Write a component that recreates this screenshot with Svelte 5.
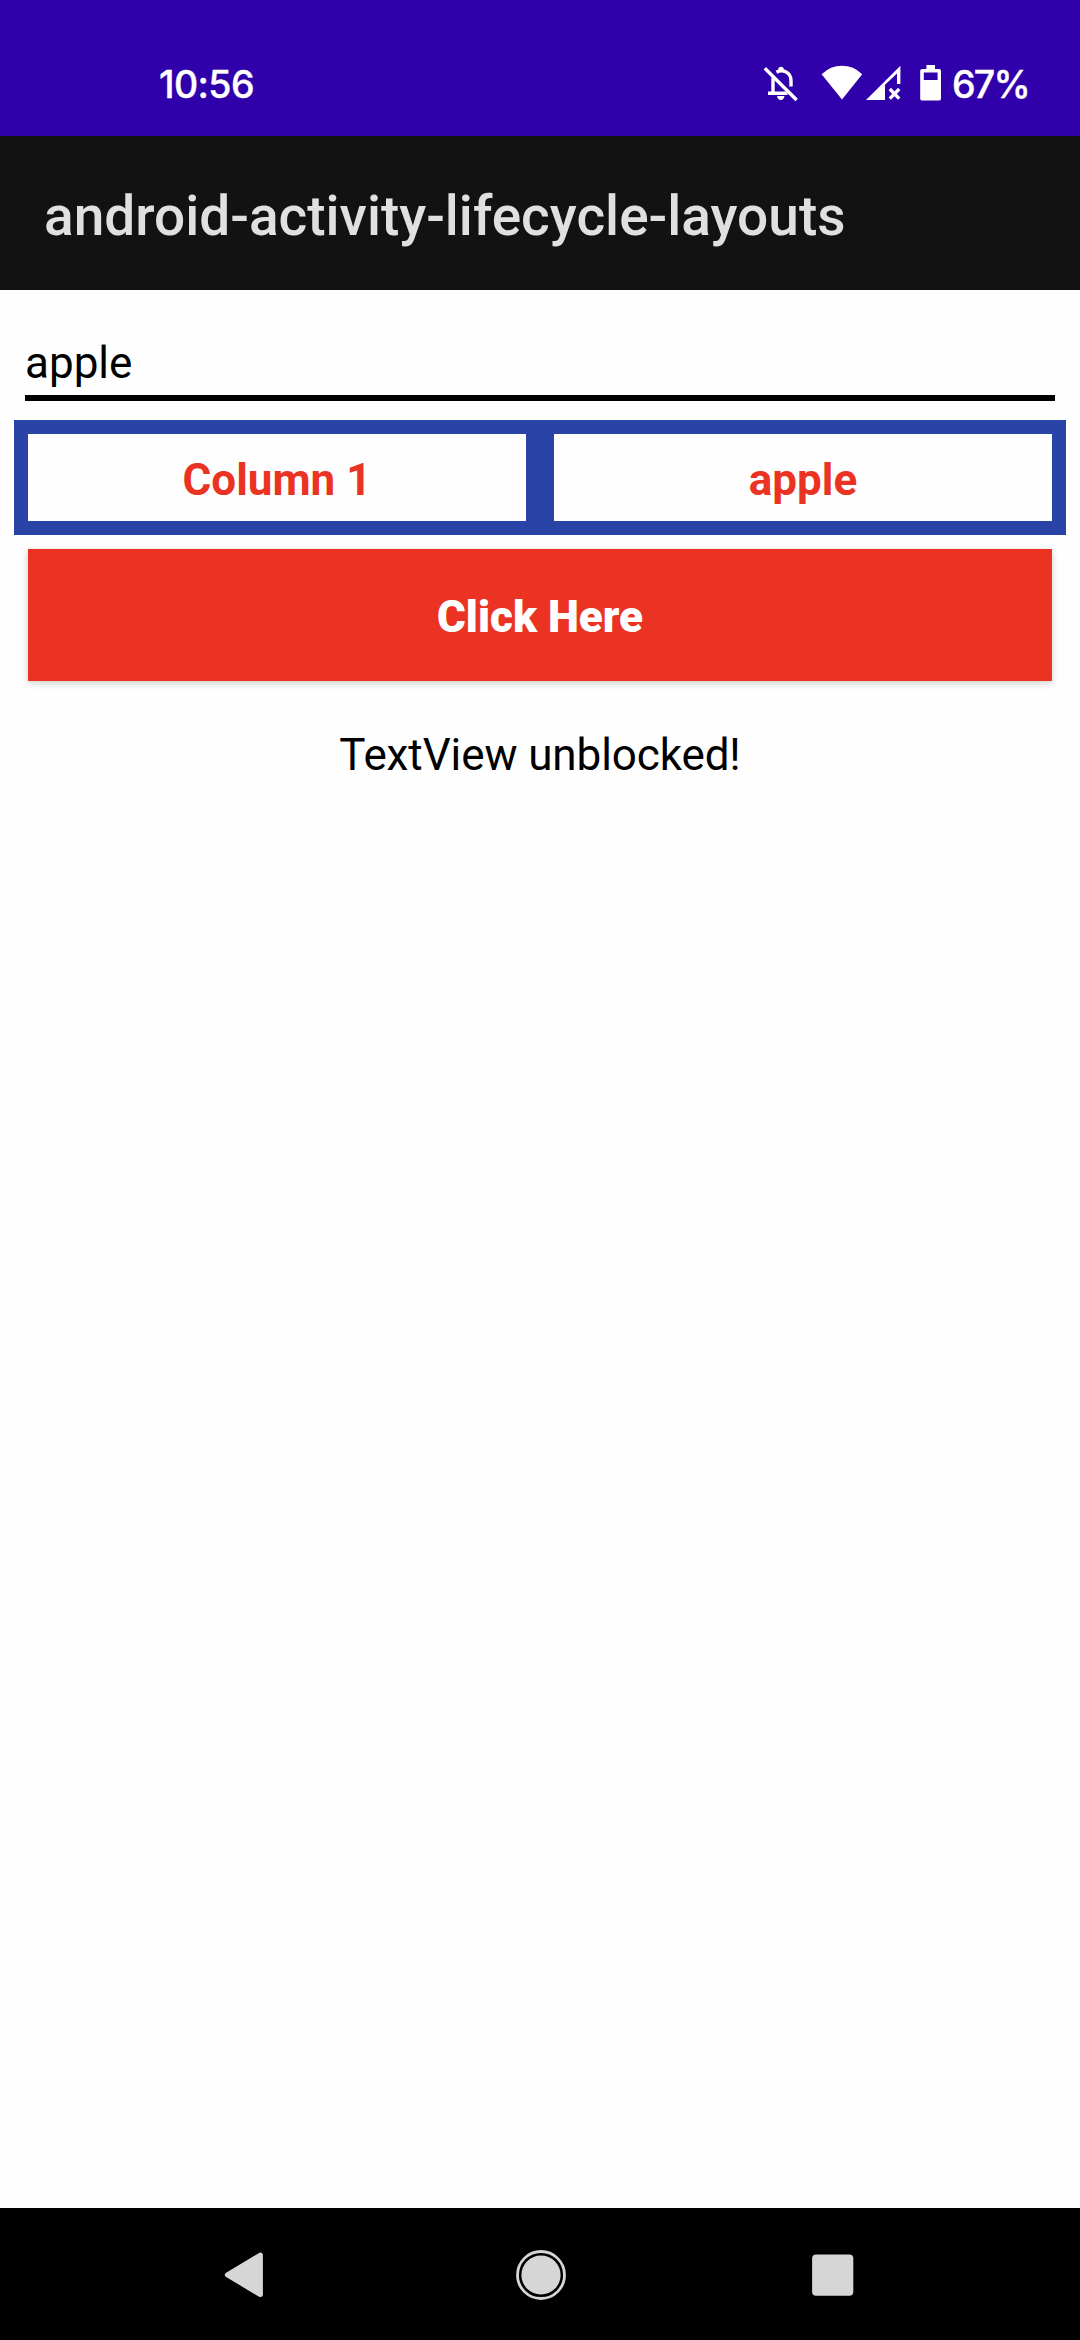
<script>
  let value = $state('apple');
  const title = 'android-activity-lifecycle-layouts';
</script>

<div class="screen">
  <header class="status">
    <span class="clock">10:56</span>
    <div class="indicators">
      <svg class="bell" width="36" height="38" viewBox="0 0 36 38">
        <g fill="none" stroke="#fff" stroke-width="3.4">
          <path d="M10 12.5V27.2M5 28.2H24.5" />
          <path d="M13.5 7.2Q18 4.6 22.6 6.8Q28 9.4 28 15.5V21.5" />
          <path d="M1.8 3.2L33.6 35" />
        </g>
        <path fill="#fff" d="M14 31H21.5Q20.8 35 17.8 35Q14.8 35 14 31ZM15.2 6V4.4Q15.4 1.8 18 1.8Q20.6 1.8 20.8 4.4V6Z" />
      </svg>
      <svg class="wifi" width="42" height="36" viewBox="0 0 42 36">
        <path fill="#fff" d="M.6 9.2Q9.5 .8 21 .8Q32.5 .8 41.2 9.2L21 34.6Z" />
      </svg>
      <svg class="signal" width="36" height="36" viewBox="0 0 36 36">
        <path fill="#fff" d="M0 35L34.4 .8V19H31V8.4L19 19.8V35Z" />
        <path fill="none" stroke="#fff" stroke-width="3.3" d="M23.8 24L33.2 33.6M33.2 24L23.8 33.6" />
      </svg>
      <svg class="battery" width="22" height="36" viewBox="0 0 22 36">
        <path fill="#fff" fill-rule="evenodd" d="M6.4 0H15V4H19Q21 4 21 6V33.4Q21 35.6 19 35.6H2.2Q.2 35.6 .2 33.4V6Q.2 4 2.2 4H6.4ZM3.8 7.4V15H17.6V7.4Z" />
      </svg>
      <span class="percent">67%</span>
    </div>
  </header>

  <div class="appbar"><h1>{title}</h1></div>

  <main>
    <input type="text" bind:value aria-label="Text" />
    <div class="table">
      <div class="cell">Column 1</div>
      <div class="cell">{value}</div>
    </div>
    <button type="button">Click Here</button>
    <p>TextView unblocked!</p>
  </main>

  <nav>
    <svg width="46" height="48" viewBox="0 0 46 48">
      <path fill="#d6d6d6" stroke="#d6d6d6" stroke-width="5" stroke-linejoin="round" d="M4.4 23.9L37.4 4.1V43.6Z" />
    </svg>
    <svg width="50" height="50" viewBox="0 0 50 50">
      <circle cx="25" cy="25" r="23.5" fill="none" stroke="#d6d6d6" stroke-width="2.8" />
      <circle cx="25" cy="25" r="19.6" fill="#d6d6d6" />
    </svg>
    <svg width="42" height="42" viewBox="0 0 42 42">
      <rect x=".1" y=".4" width="41.2" height="41.4" rx="4" fill="#d6d6d6" />
    </svg>
  </nav>
</div>

<style>
  :global(body) {
    margin: 0;
    background: #fff;
  }
  .screen {
    display: flex;
    flex-direction: column;
    width: 1080px;
    height: 2340px;
    overflow: hidden;
    background: #fefefe;
    color: #000;
    font: 400 44px/52px Roboto, sans-serif;
  }
  .status {
    box-sizing: border-box;
    display: flex;
    justify-content: space-between;
    height: 136px;
    padding: 61px 53px 0 159px;
    background: #3000ab;
    color: #fff;
    font: 500 37.5px/48px Inter, sans-serif;
    -webkit-text-stroke: 0.4px #fff;
  }
  .clock {
    letter-spacing: -0.6px;
  }
  .indicators {
    display: flex;
  }
  .indicators svg {
    margin-top: 4px;
  }
  .bell {
    margin-right: 22px;
  }
  .wifi {
    margin-right: 3px;
  }
  .signal {
    margin-right: 18px;
  }
  .battery {
    margin-right: 10px;
  }
  .percent {
    width: 75px;
    white-space: nowrap;
    letter-spacing: -1.8px;
  }
  .appbar {
    box-sizing: border-box;
    display: flex;
    align-items: center;
    height: 154px;
    padding: 6px 44px 0;
    background: #121212;
    color: #e0e0e0;
  }
  h1 {
    margin: 0;
    font-size: 55px;
    font-weight: 500;
    line-height: 64px;
  }
  main {
    flex: 1;
    display: flex;
    flex-direction: column;
    padding: 37px 14px 0;
  }
  input {
    box-sizing: border-box;
    height: 74px;
    margin: 0 11px;
    padding: 10px 0 6px;
    border: 0;
    border-bottom: 6px solid #000;
    border-radius: 0;
    outline: 0;
    background: none;
    color: #000;
    font: inherit;
  }
  .table {
    display: grid;
    grid-template-columns: 1fr 1fr;
    gap: 28px;
    height: 87px;
    margin-top: 19px;
    padding: 14px;
    background: #2a43a6;
  }
  .cell {
    display: flex;
    align-items: center;
    justify-content: center;
    padding-top: 5px;
    height: 82px;
    background: #fefefe;
    color: #eb3323;
    font-weight: 700;
  }
  button {
    height: 132px;
    margin: 14px 14px 0;
    padding: 4px 0 0;
    border: 0;
    background: #eb3323;
    box-shadow: 0 2px 7px rgba(0, 0, 0, 0.2);
    color: #fff;
    font: 900 44px/52px Roboto, sans-serif;
  }
  p {
    margin: 48px 0 0;
    text-align: center;
    letter-spacing: -0.1px;
  }
  nav {
    display: flex;
    align-items: center;
    justify-content: space-between;
    box-sizing: border-box;
    height: 132px;
    padding: 1px 226px 0 223px;
    background: #000;
  }
</style>
